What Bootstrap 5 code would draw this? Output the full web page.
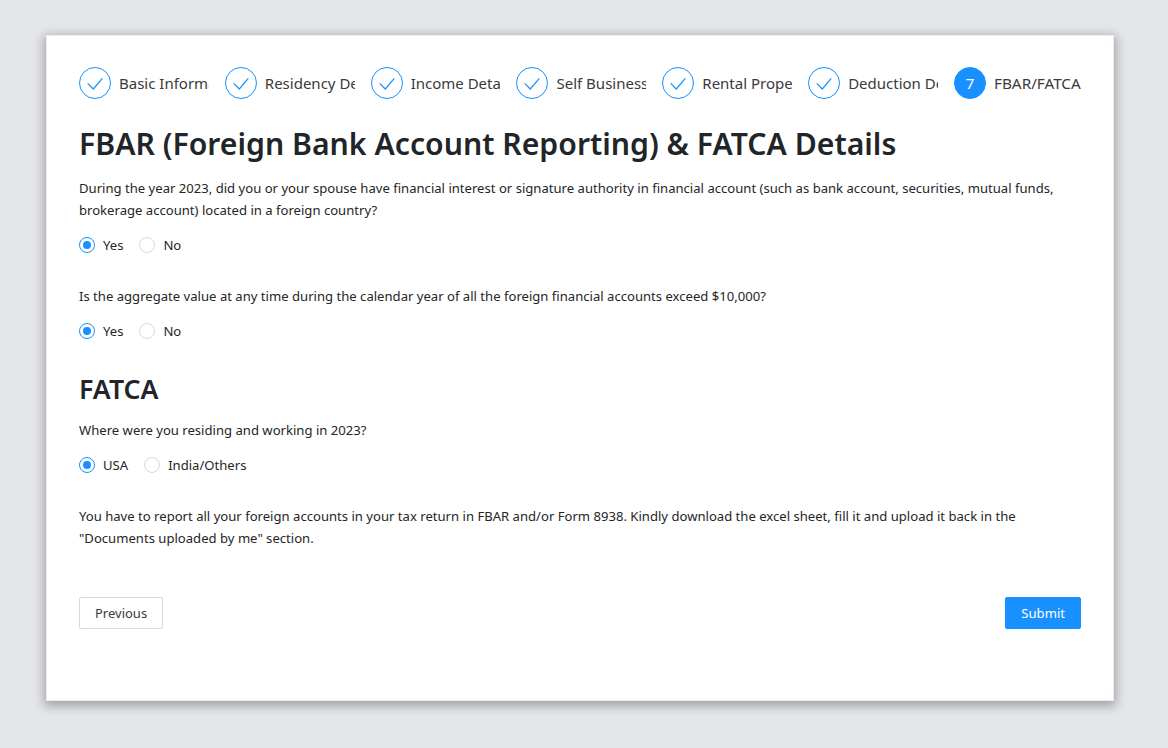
<!DOCTYPE html>
<html lang="en">
<head>
    <meta charset="UTF-8">
    <meta name="viewport" content="width=device-width, initial-scale=1.0">
    <title>FBAR &amp; FATCA Details</title>
    <link href="https://cdn.jsdelivr.net/npm/bootstrap@5.3.2/dist/css/bootstrap.min.css" rel="stylesheet">
    <style>
        html, body { height: 100%; }
        body { background: #e4e6ea; font-family: "Noto Sans", "Open Sans", sans-serif; font-size: 13.1px; color: #262626; overflow: hidden; }
        .page-wrap { padding: 35px 54px 47px 46px; height: 748px; }
        .form-panel { background: #fff; height: 666px; padding: 31px 32px; border: 1px solid #ededed; box-shadow: 0 3px 10px 2px rgba(0,0,0,.3); }
        .steps-row { display: grid; grid-template-columns: repeat(6, 129.83px) 1fr; column-gap: 16px; }
        .step-item { display: flex; align-items: center; gap: 8px; overflow: hidden; height: 32px; white-space: nowrap; }
        .step-dot { flex: 0 0 32px; width: 32px; height: 32px; border-radius: 50%; border: 1px solid #1890ff; display: flex; align-items: center; justify-content: center; color: #1890ff; line-height: 1; }
        .step-dot.current { background: #1890ff; color: #fff; font-size: 15px; }
        .step-title { font-size: 15px; color: #3a3a3a; overflow: hidden; }
        .step-title.current { font-size: 15.3px; }
        .main-title { font-size: 30.2px; font-weight: 600; color: #212529; margin: 23.5px 0 13px; line-height: 41px; }
        .sub-title { font-size: 26.7px; font-weight: 600; color: #212529; margin: 0 0 12px; line-height: 36px; }
        .q-text { line-height: 22px; margin: 0 0 13px; }
        .radio-row { display: flex; gap: 16px; height: 24px; align-items: center; margin-bottom: 27px; }
        .radio-opt { display: flex; align-items: center; gap: 8px; }
        .radio-mark { width: 16px; height: 16px; border-radius: 50%; border: 1px solid #d9d9d9; background: #fff; display: block; }
        .radio-mark.on { border-color: #1890ff; position: relative; }
        .radio-mark.on::after { content: ""; position: absolute; inset: 3px; border-radius: 50%; background: #1890ff; }
        .btn-row { margin-top: 48px; }
        .btn-prev, .btn-send { font-size: 13.1px; height: 32px; padding: 0 15px; border-radius: 2px; line-height: 30px; }
        .btn-prev { font-size: 13px; background: #fff; border: 1px solid #d9d9d9; color: #3a3a3a; }
        .btn-send { background: #1890ff; border: 1px solid #1890ff; color: #fff; }
    </style>
</head>
<body>
    <div class="page-wrap">
        <div class="form-panel">
            <div class="steps-row">
                <div class="step-item"><span class="step-dot"><svg width="16" height="14" viewBox="0 0 16 14" fill="none" stroke="currentColor" stroke-width="1.2"><path d="M.7 7.3 6.3 13 15.3 2.3"/></svg></span><span class="step-title">Basic Information</span></div>
                <div class="step-item"><span class="step-dot"><svg width="16" height="14" viewBox="0 0 16 14" fill="none" stroke="currentColor" stroke-width="1.2"><path d="M.7 7.3 6.3 13 15.3 2.3"/></svg></span><span class="step-title">Residency Details</span></div>
                <div class="step-item"><span class="step-dot"><svg width="16" height="14" viewBox="0 0 16 14" fill="none" stroke="currentColor" stroke-width="1.2"><path d="M.7 7.3 6.3 13 15.3 2.3"/></svg></span><span class="step-title">Income Details</span></div>
                <div class="step-item"><span class="step-dot"><svg width="16" height="14" viewBox="0 0 16 14" fill="none" stroke="currentColor" stroke-width="1.2"><path d="M.7 7.3 6.3 13 15.3 2.3"/></svg></span><span class="step-title">Self Business</span></div>
                <div class="step-item"><span class="step-dot"><svg width="16" height="14" viewBox="0 0 16 14" fill="none" stroke="currentColor" stroke-width="1.2"><path d="M.7 7.3 6.3 13 15.3 2.3"/></svg></span><span class="step-title">Rental Property</span></div>
                <div class="step-item"><span class="step-dot"><svg width="16" height="14" viewBox="0 0 16 14" fill="none" stroke="currentColor" stroke-width="1.2"><path d="M.7 7.3 6.3 13 15.3 2.3"/></svg></span><span class="step-title">Deduction Details</span></div>
                <div class="step-item"><span class="step-dot current">7</span><span class="step-title current">FBAR/FATCA</span></div>
            </div>

            <h1 class="main-title">FBAR (Foreign Bank Account Reporting) &amp; FATCA Details</h1>

            <p class="q-text">During the year 2023, did you or your spouse have financial interest or signature authority in financial account (such as bank account, securities, mutual funds, brokerage account) located in a foreign country?</p>
            <div class="radio-row">
                <label class="radio-opt"><span class="radio-mark on"></span>Yes</label>
                <label class="radio-opt"><span class="radio-mark"></span>No</label>
            </div>

            <p class="q-text">Is the aggregate value at any time during the calendar year of all the foreign financial accounts exceed $10,000?</p>
            <div class="radio-row">
                <label class="radio-opt"><span class="radio-mark on"></span>Yes</label>
                <label class="radio-opt"><span class="radio-mark"></span>No</label>
            </div>

            <h2 class="sub-title">FATCA</h2>
            <p class="q-text">Where were you residing and working in 2023?</p>
            <div class="radio-row">
                <label class="radio-opt"><span class="radio-mark on"></span>USA</label>
                <label class="radio-opt"><span class="radio-mark"></span>India/Others</label>
            </div>

            <p class="q-text">You have to report all your foreign accounts in your tax return in FBAR and/or Form 8938. Kindly download the excel sheet, fill it and upload it back in the "Documents uploaded by me" section.</p>

            <div class="d-flex justify-content-between btn-row">
                <button type="button" class="btn btn-prev">Previous</button>
                <button type="button" class="btn btn-send">Submit</button>
            </div>
        </div>
    </div>
    <script src="https://cdn.jsdelivr.net/npm/bootstrap@5.3.2/dist/js/bootstrap.bundle.min.js"></script>
</body>
</html>
